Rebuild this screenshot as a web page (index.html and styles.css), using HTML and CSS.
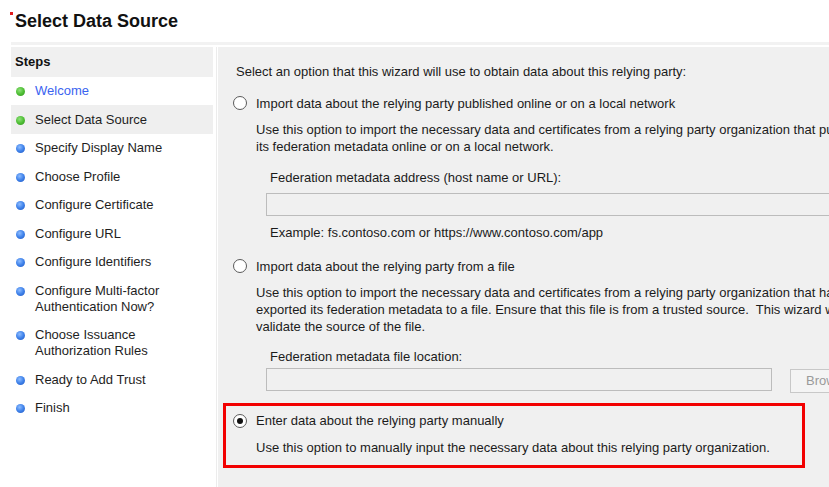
FILE: index.html
```html
<!DOCTYPE html>
<html>
<head>
<meta charset="utf-8">
<link rel="stylesheet" href="styles.css">
</head>
<body>
<div class="header">
  <span class="mark"></span>
  <h1 class="title">Select Data Source</h1>
</div>
<div class="rule"></div>
<div class="main">
  <div class="steps">
    <div class="steps-head">Steps</div>
    <ul class="step-list">
      <li class="step done link"><span class="dot green"></span><span>Welcome</span></li>
      <li class="step done current"><span class="dot green"></span><span>Select Data Source</span></li>
      <li class="step"><span class="dot blue"></span><span>Specify Display Name</span></li>
      <li class="step"><span class="dot blue"></span><span>Choose Profile</span></li>
      <li class="step"><span class="dot blue"></span><span>Configure Certificate</span></li>
      <li class="step"><span class="dot blue"></span><span>Configure URL</span></li>
      <li class="step"><span class="dot blue"></span><span>Configure Identifiers</span></li>
      <li class="step"><span class="dot blue"></span><span>Configure Multi-factor<br>Authentication Now?</span></li>
      <li class="step"><span class="dot blue"></span><span>Choose Issuance<br>Authorization Rules</span></li>
      <li class="step"><span class="dot blue"></span><span>Ready to Add Trust</span></li>
      <li class="step"><span class="dot blue"></span><span>Finish</span></li>
    </ul>
  </div>
  <div class="content">
    <p class="intro">Select an option that this wizard will use to obtain data about this relying party:</p>

    <div class="option opt1">
      <span class="radio"></span>
      <span class="opt-label">Import data about the relying party published online or on a local network</span>
    </div>
    <p class="desc d1">Use this option to import the necessary data and certificates from a relying party organization that publishes<br>its federation metadata online or on a local network.</p>
    <p class="field-label fl1">Federation metadata address (host name or URL):</p>
    <div class="input wide"></div>
    <p class="example">Example: fs.contoso.com or https://www.contoso.com/app</p>

    <div class="option opt2">
      <span class="radio"></span>
      <span class="opt-label">Import data about the relying party from a file</span>
    </div>
    <p class="desc d2">Use this option to import the necessary data and certificates from a relying party organization that has<br>exported its federation metadata to a file. Ensure that this file is from a trusted source.&nbsp; This wizard will not<br>validate the source of the file.</p>
    <p class="field-label fl2">Federation metadata file location:</p>
    <div class="file-row">
      <div class="input file"></div>
      <div class="browse">Browse...</div>
    </div>

    <div class="highlight">
      <div class="option opt3">
        <span class="radio checked"></span>
        <span class="opt-label">Enter data about the relying party manually</span>
      </div>
      <p class="desc d3">Use this option to manually input the necessary data about this relying party organization.</p>
    </div>
  </div>
</div>
</body>
</html>
```

FILE: styles.css
```css
* { box-sizing: border-box; }
html, body {
  margin: 0;
  padding: 0;
  background: #ffffff;
  width: 829px;
  height: 487px;
  overflow: hidden;
  font-family: "Liberation Sans", Arial, sans-serif;
  font-size: 13px;
  color: #1b1b1b;
}
p { margin: 0; }

.header {
  position: relative;
  height: 42px;
  padding: 10px 0 0 15px;
}
.mark {
  position: absolute;
  left: 10px;
  top: 12px;
  width: 3px;
  height: 3px;
  background: #e21b1b;
}
.title {
  margin: 0;
  font-size: 18px;
  font-weight: bold;
  line-height: 22px;
  color: #111;
}
.rule {
  margin-left: 11px;
  height: 3px;
  background: #f2f2f2;
}

.main {
  display: flex;
  margin-top: 2px;
  height: 440px;
}

.steps {
  width: 206px;
  margin-left: 11px;
  border-right: 1px solid #ececec;
  flex: none;
}
.steps-head {
  height: 29.5px;
  line-height: 29px;
  background: #f0f0f0;
  padding-left: 4px;
  font-weight: bold;
  font-size: 13px;
  color: #111;
  margin-right: 3px;
}
.step-list {
  list-style: none;
  margin: 0;
  padding: 0;
}
.step {
  display: flex;
  align-items: flex-start;
  padding: 6px 0 6.5px 5px;
  line-height: 16px;
  margin-right: 3px;
  color: #1e1e1e;
}
.step.current { background: #efefef; padding-top: 7px; padding-bottom: 6px; }
.step.link { color: #3a63f0; }
.dot {
  width: 9px;
  height: 9px;
  border-radius: 50%;
  margin: 4px 10px 0 0;
  flex: none;
}
.dot.green {
  background: radial-gradient(circle at 40% 35%, #8ee07a 0%, #4fbf35 50%, #2f8f1f 100%);
}
.dot.blue {
  background: radial-gradient(circle at 40% 35%, #8dbcff 0%, #3f82ea 50%, #1f56c0 100%);
}

.content {
  flex: 1;
  margin-left: 1px;
  background: #f0f0f0;
  overflow: hidden;
  padding-top: 15.5px;
  white-space: nowrap;
}
.intro {
  line-height: 17px;
  padding-left: 18px;
}
.option {
  display: flex;
  align-items: center;
  line-height: 17px;
  padding-left: 15px;
}
.opt1 { margin-top: 15px; }
.opt2 { margin-top: 17px; }
.radio {
  width: 14px;
  height: 14px;
  border-radius: 50%;
  border: 1px solid #5a5a5a;
  background: #fff;
  margin-right: 9px;
  flex: none;
  display: flex;
  align-items: center;
  justify-content: center;
}
.radio.checked::after {
  content: "";
  width: 6px;
  height: 6px;
  border-radius: 50%;
  background: #111;
}
.desc {
  line-height: 17px;
  padding-left: 38px;
  margin-top: 9px;
}
.d2 { margin-top: 9px; }
.field-label {
  line-height: 17px;
  padding-left: 52px;
}
.fl1 { margin-top: 14px; }
.fl2 { margin-top: 13px; }
.input {
  height: 23px;
  border: 1px solid #bcbcbc;
  background: #f0f0f0;
}
.input.wide {
  margin: 7.5px 0 0 48px;
  width: 700px;
}
.example {
  line-height: 17px;
  padding-left: 52px;
  margin-top: 7.5px;
}
.file-row {
  display: flex;
  align-items: flex-start;
  margin-top: 3.5px;
  padding-left: 48px;
}
.input.file { width: 506px; flex: none; }
.browse {
  margin: 1px 0 0 18px;
  width: 76px;
  height: 24px;
  border: 1px solid #c8c8c8;
  background: #f4f4f4;
  color: #9a9a9a;
  line-height: 22px;
  padding-left: 15px;
  flex: none;
}
.highlight {
  margin: 9.5px 0 0 5px;
  width: 582px;
  height: 65px;
  border: 3px solid #f20000;
  padding: 6.5px 0 0 0;
}
.highlight .option { padding-left: 7px; }
.highlight .desc { padding-left: 30px; margin-top: 10px; }
```
